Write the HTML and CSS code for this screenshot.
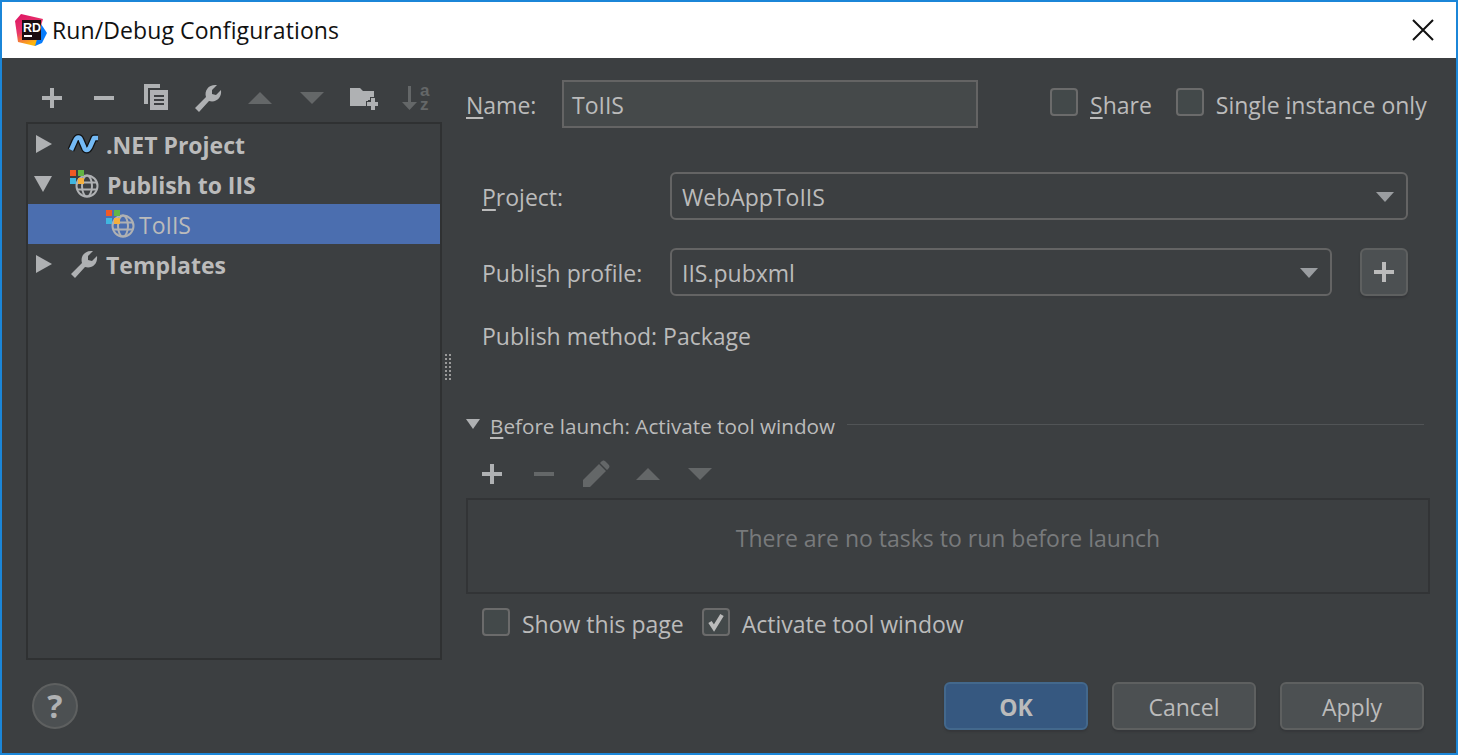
FILE: index.html
```html
<!DOCTYPE html>
<html lang="en">
<head>
  <meta charset="UTF-8" />
  <title>Run/Debug Configurations</title>
  <link rel="stylesheet" href="styles.css">
</head>
<body>
  <!-- shared icons -->
  <svg class="defs" width="0" height="0">
    <symbol id="i-plus" viewBox="0 0 28 28"><path d="M12 4h4v8h8v4h-8v8h-4v-8H4v-4h8z"/></symbol>
    <symbol id="i-minus" viewBox="0 0 28 28"><path d="M4 12h20v4H4z"/></symbol>
    <symbol id="i-up" viewBox="0 0 28 28"><path d="M2 20 14 8l12 12z"/></symbol>
    <symbol id="i-down" viewBox="0 0 28 28"><path d="M2 8h24L14 20z"/></symbol>
    <symbol id="i-wrench" viewBox="0 0 28 28"><path d="M1 24 12 13C10 6 15 0 23 1L18 6v4l4 1 5-5c1 8-5 13-12 11L5 28z"/></symbol>
    <symbol id="i-globe" viewBox="0 0 24 24">
      <g fill="none" stroke="currentColor" stroke-width="2">
        <circle cx="12" cy="12" r="10.5"/>
        <ellipse cx="12" cy="12" rx="5" ry="10.5"/>
        <path d="M2 8.5h20M2 15.5h20"/>
      </g>
    </symbol>
  </svg>

  <div class="window">
    <div class="titlebar">
      <svg class="logo" width="32" height="32" viewBox="0 0 32 32">
        <defs>
          <linearGradient id="rdA" x1="0" y1="0" x2="0.4" y2="1"><stop offset="0" stop-color="#dd1265"/><stop offset="0.55" stop-color="#e8366a"/><stop offset="1" stop-color="#fdb60d"/></linearGradient>
        </defs>
        <path d="M22 4 32 19 27 29 20 32 12 24z" fill="#087cfa"/>
        <path d="M6 0 28 5 20 32 3 28 0 7z" fill="url(#rdA)"/>
        <rect x="7" y="6" width="19" height="20" fill="#1a0d11"/>
        <text x="8" y="17.5" class="logo-text">RD</text>
        <rect x="9" y="21" width="8" height="2" fill="#fff"/>
      </svg>
      <span class="title">Run/Debug Configurations</span>
      <svg class="close" width="22" height="22" viewBox="0 0 22 22"><path d="M1 1l20 20M21 1 1 21" stroke="#111" stroke-width="2" fill="none"/></svg>
    </div>

    <div class="content">
      <div class="left">
        <div class="toolbar">
          <span class="tool"><svg width="28" height="28"><use href="#i-plus"/></svg></span>
          <span class="tool"><svg width="28" height="28"><use href="#i-minus"/></svg></span>
          <span class="tool">
            <svg width="28" height="28" viewBox="0 0 28 28">
              <path d="M2 0h16v4H6v16H2z"/>
              <path d="M8 6h18v20H8zM12 11v2h10v-2zm0 4v2h10v-2zm0 4v2h10v-2z" fill-rule="evenodd"/>
            </svg>
          </span>
          <span class="tool"><svg width="28" height="28"><use href="#i-wrench"/></svg></span>
          <span class="tool off"><svg width="28" height="28"><use href="#i-up"/></svg></span>
          <span class="tool off"><svg width="28" height="28"><use href="#i-down"/></svg></span>
          <span class="tool">
            <svg width="28" height="28" viewBox="0 0 28 28">
              <path d="M0 4h10l3 3h11v9h-6v6H0z"/>
              <path d="M21 14h4v4h4v4h-4v4h-4v-4h-4v-4h4z" stroke="#3c3f41" stroke-width="2" paint-order="stroke"/>
            </svg>
          </span>
          <span class="tool off">
            <svg class="sort" width="28" height="28" viewBox="0 0 28 28">
              <path d="M6 2h3v16h6l-7.5 8L0 18h6z"/>
              <text class="sort-text"><tspan x="18" y="12">a</tspan><tspan x="18" y="26">z</tspan></text>
            </svg>
          </span>
        </div>

        <div class="tree">
          <div class="row">
            <svg class="arrow" width="16" height="18" viewBox="0 0 16 18"><path d="M0 0l16 9-16 9z"/></svg>
            <svg class="net" width="32" height="18" viewBox="0 0 32 18">
              <path class="net-edge" d="M3 15 7 6C9 1 12 2 13 5L16 12C17 16 20 16 22 12L26 3H30"/>
              <path class="net-fill" d="M3 15 7 6C9 1 12 2 13 5L16 12C17 16 20 16 22 12L26 3H30"/>
            </svg>
            <span class="bold">.NET Project</span>
          </div>
          <div class="row">
            <svg class="arrow arrow-open" width="18" height="16" viewBox="0 0 18 16"><path d="M0 0h18l-9 16z"/></svg>
            <span class="iis">
              <svg class="globe" width="24" height="24"><use href="#i-globe"/></svg>
              <span class="tiles"><i class="t1"></i><i class="t2"></i><i class="t3"></i><i class="t4"></i></span>
            </span>
            <span class="bold">Publish to IIS</span>
          </div>
          <div class="row selected">
            <span class="iis iis-child">
              <svg class="globe" width="24" height="24"><use href="#i-globe"/></svg>
              <span class="tiles"><i class="t1"></i><i class="t2"></i><i class="t3"></i><i class="t4"></i></span>
            </span>
            <span>ToIIS</span>
          </div>
          <div class="row">
            <svg class="arrow" width="16" height="18" viewBox="0 0 16 18"><path d="M0 0l16 9-16 9z"/></svg>
            <svg class="tpl" width="28" height="28"><use href="#i-wrench"/></svg>
            <span class="bold">Templates</span>
          </div>
        </div>
      </div>

      <div class="splitter"><span class="grip"></span></div>

      <div class="right">
        <div class="name-row">
          <label class="name-label"><u>N</u>ame:</label>
          <div class="name-input">ToIIS</div>
          <label class="check share"><span class="box"></span><span><u>S</u>hare</span></label>
          <label class="check single"><span class="box"></span><span>Single <u>i</u>nstance only</span></label>
        </div>

        <div class="form">
          <label><u>P</u>roject:</label>
          <div class="combo">WebAppToIIS<span class="caret"></span></div>
          <label>Publi<u>s</u>h profile:</label>
          <div class="combo-row">
            <div class="combo">IIS.pubxml<span class="caret"></span></div>
            <div class="square-btn"><svg width="28" height="28"><use href="#i-plus"/></svg></div>
          </div>
          <div class="method">Publish method: Package</div>
        </div>

        <div class="launch-head">
          <span class="launch-arrow"></span>
          <span><u>B</u>efore launch: Activate tool window</span>
          <span class="launch-line"></span>
        </div>
        <div class="toolbar">
          <span class="tool"><svg width="28" height="28"><use href="#i-plus"/></svg></span>
          <span class="tool off"><svg width="28" height="28"><use href="#i-minus"/></svg></span>
          <span class="tool off">
            <svg width="28" height="28" viewBox="0 0 28 28"><path d="M1 20 17 4l7 7L8 27H1zM19 2c2-2 3-2 5 0l2 2c2 2 2 3 0 5l-1 1-7-7z"/></svg>
          </span>
          <span class="tool off"><svg width="28" height="28"><use href="#i-up"/></svg></span>
          <span class="tool off"><svg width="28" height="28"><use href="#i-down"/></svg></span>
        </div>
        <div class="tasks">There are no tasks to run before launch</div>
        <div class="task-opts">
          <label class="check"><span class="box"></span><span>Show this page</span></label>
          <label class="check"><span class="box"><svg width="24" height="24" viewBox="0 0 24 24"><path d="M6 12l4 6 8-13" fill="none" stroke="#bbb" stroke-width="4"/></svg></span><span>Activate tool window</span></label>
        </div>
      </div>
    </div>

    <div class="footer">
      <div class="help">?</div>
      <div class="buttons">
        <div class="btn btn-ok">OK</div>
        <div class="btn">Cancel</div>
        <div class="btn">Apply</div>
      </div>
    </div>
  </div>
</body>
</html>
```

FILE: styles.css
```css
* {
  box-sizing: border-box;
}

body {
  margin: 0;
  font-family: "Open Sans", sans-serif;
  font-size: 23px;
  color: #bbbbbb;
  background: #3c3f41;
}

u {
  text-underline-offset: 3px;
}

.defs {
  position: absolute;
}

.window {
  height: 755px;
  display: flex;
  flex-direction: column;
  border: 2px solid #1b86d8;
  background: #3c3f41;
}

/* title bar */
.titlebar {
  height: 56px;
  background: #fff;
  color: #111;
  display: flex;
  align-items: center;
  padding: 0 22px 0 13px;
}

.logo {
  margin-right: 5px;
}

.logo-text {
  font-family: "Liberation Sans", sans-serif;
  font-weight: bold;
  font-size: 12.5px;
  fill: #fff;
}

.title {
  flex: 1;
  letter-spacing: 0.1px;
}

/* main area */
.content {
  flex: 1;
  display: flex;
  min-height: 0;
}

.left {
  width: 440px;
  flex-shrink: 0;
  padding: 16px 0 0 24px;
  display: flex;
  flex-direction: column;
}

.toolbar {
  display: flex;
  height: 48px;
}

.tool {
  width: 52px;
  display: flex;
  align-items: center;
  justify-content: center;
  fill: #afb1b3;
}

.tool.off {
  fill: #646768;
}

.sort {
  overflow: visible;
}

.sort-text {
  font-family: "Liberation Sans", sans-serif;
  font-weight: bold;
  font-size: 17px;
}

.tree {
  flex: 1;
  border: 2px solid #2f3132;
}

.row {
  height: 40px;
  display: flex;
  align-items: center;
}

.row > span:last-child {
  padding-top: 2px;
}

.row.selected {
  background: #4b6eaf;
}

.bold {
  font-weight: bold;
}

.arrow {
  fill: #afb1b3;
  margin-left: 8px;
  margin-right: 16px;
}

.arrow-open {
  margin-left: 6px;
  margin-right: 18px;
}

.net {
  margin-right: 6px;
  overflow: visible;
}

.net-edge {
  fill: none;
  stroke: #111;
  stroke-width: 7;
  stroke-linejoin: round;
}

.net-fill {
  fill: none;
  stroke: #74baf5;
  stroke-width: 4.5;
  stroke-linejoin: round;
}

.tpl {
  fill: #afb1b3;
  margin-right: 8px;
  margin-left: 2px;
}

/* IIS icon: tiles over a globe */
.iis {
  position: relative;
  width: 28px;
  height: 28px;
  margin-right: 9px;
  color: #afb1b3;
}

.iis-child {
  margin-left: 78px;
  margin-right: 5px;
}

.globe {
  position: absolute;
  left: 5px;
  top: 4px;
}

.tiles {
  position: absolute;
  left: 0;
  top: 0;
  display: grid;
  grid-template-columns: 6px 6px;
  gap: 2px;
}

.tiles i {
  width: 6px;
  height: 6px;
}

.t1 { background: #f05a24; }
.t2 { background: #62b543; }
.t3 { background: #40b6e0; }
.t4 { background: #f4af3d; }

.splitter {
  width: 24px;
  flex-shrink: 0;
  display: flex;
  align-items: flex-start;
}

.grip {
  width: 8px;
  height: 28px;
  margin: 296px 0 0 3px;
  background-image: radial-gradient(circle at 1px 1px, #9a9a9a 1px, transparent 1.2px);
  background-size: 4px 4px;
}

/* right side */
.right {
  width: 964px;
  flex-shrink: 0;
  padding-top: 22px;
}

.name-row {
  display: flex;
  align-items: center;
  height: 48px;
  white-space: nowrap;
}

.name-label {
  width: 96px;
  flex-shrink: 0;
  padding-top: 2px;
}

.name-input {
  width: 416px;
  flex-shrink: 0;
  height: 48px;
  line-height: 46px;
  padding-left: 8px;
  border: 2px solid #646464;
  background: #45494a;
}

.check {
  display: flex;
  align-items: center;
  gap: 12px;
  white-space: nowrap;
}

.check > span:last-child {
  padding-top: 2px;
}

.share {
  margin-left: 72px;
}

.single {
  margin-left: 24px;
}

.box {
  width: 28px;
  height: 28px;
  flex-shrink: 0;
  border: 2px solid #6b6b6b;
  border-radius: 4px;
  background: #43494a;
  display: flex;
  align-items: center;
  justify-content: center;
  margin-top: -4px;
}

.form {
  margin: 44px 22px 0 16px;
  display: grid;
  grid-template-columns: 188px 1fr;
  row-gap: 28px;
  align-items: center;
}

.form > label {
  padding-top: 2px;
}

.combo {
  position: relative;
  flex: 1;
  height: 48px;
  line-height: 46px;
  padding-left: 10px;
  border: 2px solid #646464;
  border-radius: 6px;
}

.caret {
  position: absolute;
  right: 12px;
  top: 18px;
  border-left: 9px solid transparent;
  border-right: 9px solid transparent;
  border-top: 10px solid #9a9da0;
}

.combo-row {
  display: flex;
  gap: 28px;
}

.square-btn {
  width: 48px;
  height: 48px;
  border: 2px solid #5e6060;
  border-radius: 6px;
  background: #4c5052;
  fill: #bbbbbb;
  display: flex;
  align-items: center;
  justify-content: center;
  box-shadow: 0 2px 2px #35373a;
}

.method {
  grid-column: 1 / 3;
  height: 32px;
  line-height: 32px;
  margin-top: -4px;
}

.launch-head {
  margin-top: 62px;
  height: 24px;
  display: flex;
  align-items: center;
  margin-right: 6px;
  font-size: 20.7px;
}

.launch-arrow {
  border-left: 7px solid transparent;
  border-right: 7px solid transparent;
  border-top: 10px solid #afb1b3;
  margin-right: 10px;
  margin-top: -4px;
}

.launch-line {
  flex: 1;
  height: 1px;
  margin: -4px 0 0 12px;
  background: #515456;
}

.launch-head + .toolbar {
  margin-top: 12px;
}

.tasks {
  height: 96px;
  border: 2px solid #323436;
  padding-top: 22px;
  line-height: 32px;
  text-align: center;
  color: #787a7c;
}

.task-opts {
  display: flex;
  gap: 18px;
  margin: 14px 0 0 16px;
  height: 28px;
  align-items: center;
}

.task-opts .box {
  margin-top: 0;
}

.task-opts .check > span:last-child {
  padding-top: 4px;
}

/* footer */
.footer {
  margin: 22px 32px 23px 30px;
  height: 48px;
  display: flex;
  align-items: center;
  justify-content: space-between;
}

.help {
  width: 46px;
  height: 46px;
  border: 2px solid #5e6060;
  border-radius: 50%;
  background: #4c5052;
  color: #afb1b3;
  font-weight: bold;
  font-size: 32px;
  line-height: 41px;
  text-align: center;
}

.buttons {
  display: flex;
  gap: 24px;
}

.btn {
  width: 144px;
  height: 48px;
  line-height: 46px;
  text-align: center;
  border: 2px solid #5e6060;
  border-radius: 6px;
  background: #4c5052;
  box-shadow: 0 2px 2px #35373a;
}

.btn-ok {
  background: #365880;
  border-color: #43688c;
  font-weight: bold;
}
```
